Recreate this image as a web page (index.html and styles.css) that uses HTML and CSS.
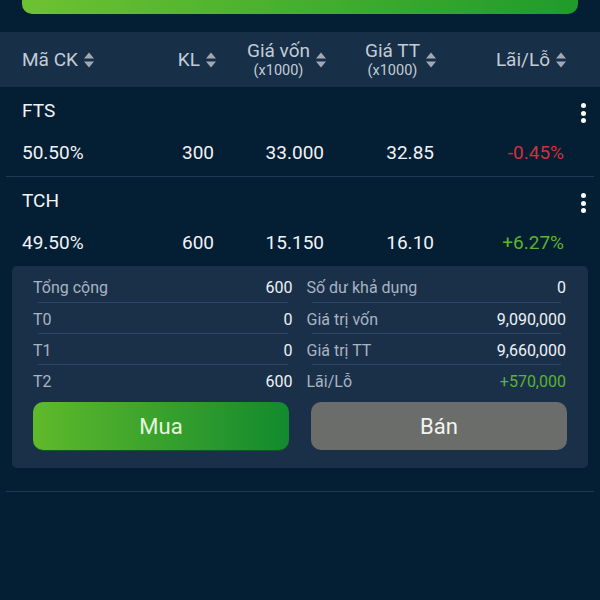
FILE: index.html
```html
<!DOCTYPE html>
<html lang="vi">
<head>
  <meta charset="UTF-8">
  <meta name="viewport" content="width=device-width, initial-scale=1.0">
  <title>Danh mục</title>
  <link rel="stylesheet" href="styles.css">
</head>
<body>
  <div class="top-bar"></div>

  <div class="table-head">
    <div class="th th-first"><span>Mã CK</span><svg class="sort" viewBox="0 0 12 18"><path d="M1 7.5 6 1.5 11 7.5Z M1 10.5 6 16.5 11 10.5Z"/></svg></div>
    <div class="th"><span>KL</span><svg class="sort" viewBox="0 0 12 18"><path d="M1 7.5 6 1.5 11 7.5Z M1 10.5 6 16.5 11 10.5Z"/></svg></div>
    <div class="th"><span class="two-line">Giá vốn<small>(x1000)</small></span><svg class="sort" viewBox="0 0 12 18"><path d="M1 7.5 6 1.5 11 7.5Z M1 10.5 6 16.5 11 10.5Z"/></svg></div>
    <div class="th"><span class="two-line">Giá TT<small>(x1000)</small></span><svg class="sort" viewBox="0 0 12 18"><path d="M1 7.5 6 1.5 11 7.5Z M1 10.5 6 16.5 11 10.5Z"/></svg></div>
    <div class="th"><span>Lãi/Lỗ</span><svg class="sort" viewBox="0 0 12 18"><path d="M1 7.5 6 1.5 11 7.5Z M1 10.5 6 16.5 11 10.5Z"/></svg></div>
  </div>

  <!-- holdings -->
  <div class="stock-row with-line">
    <div class="stock-name">
      <span>FTS</span>
      <span class="kebab"><i></i><i></i><i></i></span>
    </div>
    <div class="stock-values">
      <span class="first">50.50%</span>
      <span>300</span>
      <span>33.000</span>
      <span>32.85</span>
      <span class="down">-0.45%</span>
    </div>
  </div>

  <div class="stock-row">
    <div class="stock-name">
      <span>TCH</span>
      <span class="kebab"><i></i><i></i><i></i></span>
    </div>
    <div class="stock-values">
      <span class="first">49.50%</span>
      <span>600</span>
      <span>15.150</span>
      <span>16.10</span>
      <span class="up">+6.27%</span>
    </div>
  </div>

  <div class="summary">
    <div class="stats">
      <div class="stat"><span>Tổng cộng</span><b>600</b></div>
      <div class="stat"><span>Số dư khả dụng</span><b>0</b></div>
      <div class="stat"><span>T0</span><b>0</b></div>
      <div class="stat"><span>Giá trị vốn</span><b>9,090,000</b></div>
      <div class="stat"><span>T1</span><b>0</b></div>
      <div class="stat"><span>Giá trị TT</span><b>9,660,000</b></div>
      <div class="stat last"><span>T2</span><b>600</b></div>
      <div class="stat last"><span>Lãi/Lỗ</span><b class="up">+570,000</b></div>
    </div>
    <div class="actions">
      <button class="btn btn-buy">Mua</button>
      <button class="btn btn-sell">Bán</button>
    </div>
  </div>

  <div class="bottom-line"></div>
</body>
</html>
```

FILE: styles.css
```css
body {
  margin: 0;
  background-color: #041e34;
  font-family: Roboto, "Noto Sans", sans-serif;
  color: #f1f4f7;
}

.top-bar {
  height: 14px;
  margin: 0 22px 18px;
  border-radius: 0 0 10px 10px;
  background: linear-gradient(to right, #6dc231, #1f9b2b);
}

/* table header + rows share the same columns */
.table-head,
.stock-values {
  display: grid;
  grid-template-columns: 138px 57px 110px 110px 130px;
  padding: 0 33px 0 22px;
}

.table-head {
  height: 55px;
  align-items: center;
  background-color: #182f48;
  color: #c2ccd7;
  font-size: 19px;
}

.th {
  display: flex;
  align-items: center;
  justify-content: flex-end;
  gap: 5px;
}

.th-first {
  justify-content: flex-start;
}

.two-line {
  display: flex;
  flex-direction: column;
  align-items: center;
  line-height: 22px;
}

.two-line small {
  font-size: 14.5px;
  line-height: 18px;
}

.sort {
  width: 12px;
  height: 18px;
  fill: #a0a9b3;
  flex-shrink: 0;
}

.stock-row {
  padding: 10px 0 11px;
  font-size: 19px;
}

.with-line {
  border-bottom: 1px solid #203a55;
  margin: 0 6px;
}

.with-line .stock-name {
  padding-left: 16px;
  padding-right: 8px;
}

.with-line .stock-values {
  padding-left: 16px;
  padding-right: 27px;
}

.stock-name {
  display: flex;
  justify-content: space-between;
  align-items: center;
  height: 26px;
  padding: 0 14px 0 22px;
  margin-bottom: 16px;
}

.stock-values {
  height: 26px;
  align-items: center;
}

.stock-values span {
  text-align: right;
  padding-right: 3px;
}

.stock-values .first {
  text-align: left;
}

.kebab {
  display: flex;
  flex-direction: column;
  gap: 2.5px;
  margin-top: 6px;
}

.kebab i {
  display: block;
  width: 5px;
  height: 5px;
  border-radius: 50%;
  background-color: #fff;
}

.down {
  color: #cf323b;
}

.up {
  color: #5cb332;
}

.summary {
  margin: 0 12px;
  padding: 6px 22px 18px 21px;
  background-color: #1a3049;
  border-radius: 5px;
}

.stats {
  display: grid;
  grid-template-columns: 1fr 1fr;
  column-gap: 14px;
}

.stat {
  display: flex;
  justify-content: space-between;
  align-items: center;
  height: 30px;
  border-bottom: 1px solid transparent;
  background: linear-gradient(#2c4864, #2c4864) no-repeat center bottom;
  background-size: calc(100% - 10px) 1px;
  font-size: 16px;
}

.stat:first-child,
.stat:nth-child(2) {
  height: 31px;
}

.stat.last {
  background: none;
}

.stat span {
  color: #a8b4c2;
}

.stat b {
  font-weight: 400;
  color: #eef2f6;
}

.stat b.up {
  color: #5cb332;
}

.actions {
  display: grid;
  grid-template-columns: 1fr 1fr;
  gap: 22px;
  margin-top: 5px;
  margin-right: -1px;
}

.btn {
  height: 48px;
  border: none;
  border-radius: 10px;
  font-family: inherit;
  font-size: 22px;
  cursor: pointer;
}

.btn-buy {
  background: linear-gradient(to right, #5fb92b, #128a2e);
  color: #e6f6df;
  box-shadow: 0 1px 0 #0d5a22;
}

.btn-sell {
  background-color: #6b6d6a;
  color: #f3f3f3;
}

.bottom-line {
  height: 1px;
  margin: 23px 6px 0;
  background-color: #1f3b57;
}
```
